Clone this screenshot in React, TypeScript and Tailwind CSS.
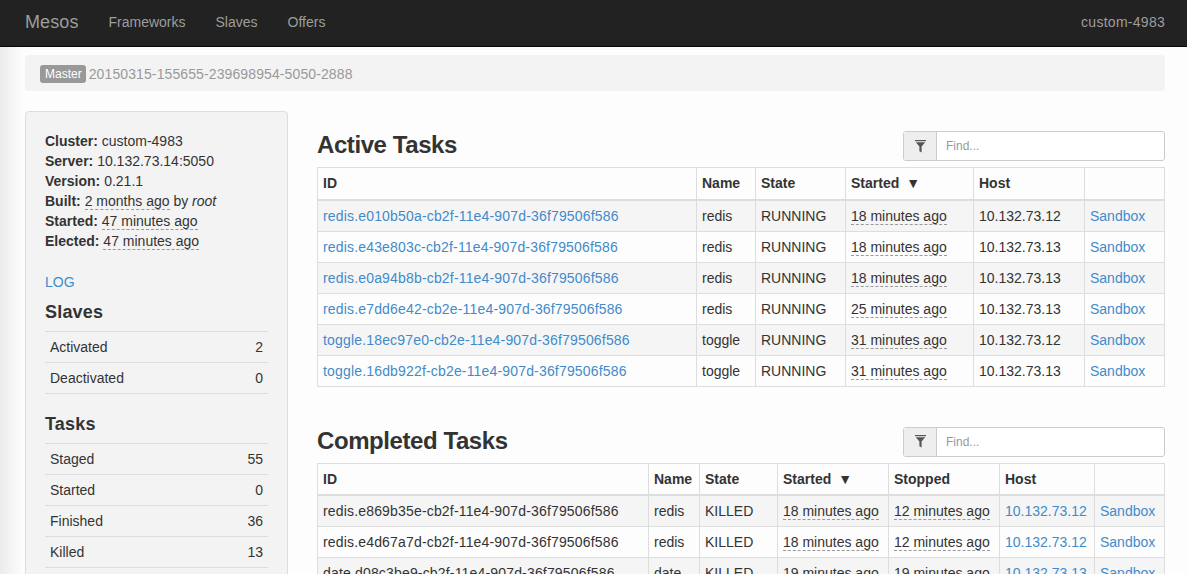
const sans = "font-['Liberation_Sans',Arial,sans-serif]";

const active = [
  ["redis.e010b50a-cb2f-11e4-907d-36f79506f586", "redis", "18 minutes ago", "10.132.73.12"],
  ["redis.e43e803c-cb2f-11e4-907d-36f79506f586", "redis", "18 minutes ago", "10.132.73.13"],
  ["redis.e0a94b8b-cb2f-11e4-907d-36f79506f586", "redis", "18 minutes ago", "10.132.73.13"],
  ["redis.e7dd6e42-cb2e-11e4-907d-36f79506f586", "redis", "25 minutes ago", "10.132.73.13"],
  ["toggle.18ec97e0-cb2e-11e4-907d-36f79506f586", "toggle", "31 minutes ago", "10.132.73.12"],
  ["toggle.16db922f-cb2e-11e4-907d-36f79506f586", "toggle", "31 minutes ago", "10.132.73.13"],
];

const completed = [
  ["redis.e869b35e-cb2f-11e4-907d-36f79506f586", "redis", "18 minutes ago", "12 minutes ago", "10.132.73.12"],
  ["redis.e4d67a7d-cb2f-11e4-907d-36f79506f586", "redis", "18 minutes ago", "12 minutes ago", "10.132.73.12"],
  ["date.d08c3be9-cb2f-11e4-907d-36f79506f586", "date", "19 minutes ago", "19 minutes ago", "10.132.73.13"],
];

function Ago({ children }: { children: string }) {
  return <span className="border-b border-dashed border-[#999]">{children}</span>;
}

function Link({ children, wide }: { children: string; wide?: boolean }) {
  return <a className={wide ? "text-[#428bca] tracking-[0.17px]" : "text-[#428bca]"}>{children}</a>;
}

function Th({ children }: { children?: React.ReactNode }) {
  return (
    <th className="border border-b-2 border-[#ddd] p-[5px] text-left align-top font-bold leading-5">
      {children}
    </th>
  );
}

function Td({ children }: { children: React.ReactNode }) {
  return <td className="border border-[#ddd] p-[5px] leading-5 whitespace-nowrap">{children}</td>;
}

function FilterIcon() {
  return (
    <svg width="11" height="13" viewBox="0 0 11 13" fill="#555">
      <rect x="0" y="0" width="11" height="1.2" />
      <path d="M0.8 2.2h9.4L6.6 6.6V12.6L4.4 11.2V6.6z" />
    </svg>
  );
}

function SortedBy() {
  return (
    <>
      Started<span className="ml-[7px] text-[14px]">▼</span>
    </>
  );
}

function FindHeader({ title, className, titleClass }: { title: string; className: string; titleClass: string }) {
  return (
    <div className={`flex h-[30px] items-center justify-between ${className}`}>
      <h3 className={`text-2xl font-bold tracking-[-0.42px] text-[#333] leading-[30px] ${titleClass}`}>{title}</h3>
      <div className="flex h-[30px] w-[262px] rounded-[3px] border border-[#ccc] bg-white">
        <span className="flex w-[33px] items-center justify-center border-r border-[#ccc] bg-[#eee]">
          <FilterIcon />
        </span>
        <span className="flex-1 pl-[9px] text-xs leading-[28px] text-[#999]">Find...</span>
      </div>
    </div>
  );
}

function StatRows({ rows }: { rows: [string, number][] }) {
  return (
    <div className="border-b border-[#ddd]">
      {rows.map(([label, value]) => (
        <div key={label} className="flex justify-between border-t border-[#ddd] p-[5px] leading-5">
          <span>{label}</span>
          <span>{value}</span>
        </div>
      ))}
    </div>
  );
}

export default function App() {
  return (
    <div className={`${sans} h-[574px] overflow-hidden bg-[#fdfdfd] bg-[linear-gradient(to_right,#ececec,#fdfdfd_24px)] text-sm leading-5 text-[#333]`}>
      <nav className="flex h-[47px] items-center justify-between border-b border-[#080808] bg-[#222] pb-0.5 pl-[25px] pr-[22px] text-[#9d9d9d]">
        <div className="flex items-center">
          <span className="mr-[30px] text-lg tracking-[0.1px]">Mesos</span>
          <div className="flex gap-[30px]">
            <a>Frameworks</a>
            <a>Slaves</a>
            <a>Offers</a>
          </div>
        </div>
        <span className="tracking-[0.27px]">custom-4983</span>
      </nav>

      <div className="pl-[25px] pr-[22px] pt-2">
        <div className="flex h-9 items-center rounded-[4px] bg-[#f3f3f3] pl-[15px] pt-px tracking-[0.11px] text-[#999]">
          <span className="mr-[3px] rounded-[3px] bg-[#999] pl-[5px] pr-1 pt-px text-xs leading-[17px] tracking-normal text-white">Master</span>
          20150315-155655-239698954-5050-2888
        </div>

        <div className="mt-5 flex gap-[29px]">
          <aside className="h-[600px] w-[263px] shrink-0 rounded-[4px] border border-[#ddd] bg-[#f3f3f3] px-[19px] pt-[19px]">
            <div>
              <p><strong>Cluster:</strong> custom-4983</p>
              <p><strong>Server:</strong> 10.132.73.14:5050</p>
              <p><strong>Version:</strong> 0.21.1</p>
              <p><strong>Built:</strong> <Ago>2 months ago</Ago> by <em>root</em></p>
              <p><strong>Started:</strong> <Ago>47 minutes ago</Ago></p>
              <p><strong>Elected:</strong> <Ago>47 minutes ago</Ago></p>
            </div>
            <p className="mt-[21px] text-[#428bca]">LOG</p>
            <h4 className="mt-[10px] mb-[9px] text-lg font-bold leading-5 tracking-[0.2px]">Slaves</h4>
            <StatRows rows={[["Activated", 2], ["Deactivated", 0]]} />
            <h4 className="mt-5 mb-[9px] text-lg font-bold leading-5 tracking-[0.2px]">Tasks</h4>
            <StatRows rows={[["Staged", 55], ["Started", 0], ["Finished", 36], ["Killed", 13], ["Failed", 0], ["Lost", 0]]} />
          </aside>

          <main className="min-w-0 flex-1 pt-5">
            <FindHeader title="Active Tasks" className="mb-[6px]" titleClass="-translate-y-px" />
            <table className="w-[847px] table-fixed border-collapse">
              <colgroup>
                <col className="w-[379px]" />
                <col className="w-[59px]" />
                <col className="w-[90px]" />
                <col className="w-[128px]" />
                <col className="w-[111px]" />
                <col className="w-[80px]" />
              </colgroup>
              <thead>
                <tr className="h-[32px]">
                  <Th>ID</Th>
                  <Th>Name</Th>
                  <Th>State</Th>
                  <Th><SortedBy /></Th>
                  <Th>Host</Th>
                  <Th />
                </tr>
              </thead>
              <tbody>
                {active.map((row, i) => (
                  <tr key={row[0]} className={i % 2 === 0 ? "bg-[#f5f5f5]" : ""}>
                    <Td><Link wide>{row[0]}</Link></Td>
                    <Td>{row[1]}</Td>
                    <Td>RUNNING</Td>
                    <Td><Ago>{row[2]}</Ago></Td>
                    <Td>{row[3]}</Td>
                    <Td><Link>Sandbox</Link></Td>
                  </tr>
                ))}
              </tbody>
            </table>

            <FindHeader title="Completed Tasks" className="mt-10 mb-[6px]" titleClass="-translate-y-px" />
            <table className="w-[847px] table-fixed border-collapse">
              <colgroup>
                <col className="w-[331px]" />
                <col className="w-[51px]" />
                <col className="w-[78px]" />
                <col className="w-[111px]" />
                <col className="w-[111px]" />
                <col className="w-[95px]" />
                <col className="w-[70px]" />
              </colgroup>
              <thead>
                <tr>
                  <Th>ID</Th>
                  <Th>Name</Th>
                  <Th>State</Th>
                  <Th><SortedBy /></Th>
                  <Th>Stopped</Th>
                  <Th>Host</Th>
                  <Th />
                </tr>
              </thead>
              <tbody>
                {completed.map((row, i) => (
                  <tr key={row[0]} className={i % 2 === 0 ? "bg-[#f5f5f5]" : ""}>
                    <Td><span className="tracking-[0.17px]">{row[0]}</span></Td>
                    <Td>{row[1]}</Td>
                    <Td>KILLED</Td>
                    <Td><Ago>{row[2]}</Ago></Td>
                    <Td><Ago>{row[3]}</Ago></Td>
                    <Td><Link>{row[4]}</Link></Td>
                    <Td><Link>Sandbox</Link></Td>
                  </tr>
                ))}
              </tbody>
            </table>
          </main>
        </div>
      </div>
    </div>
  );
}
